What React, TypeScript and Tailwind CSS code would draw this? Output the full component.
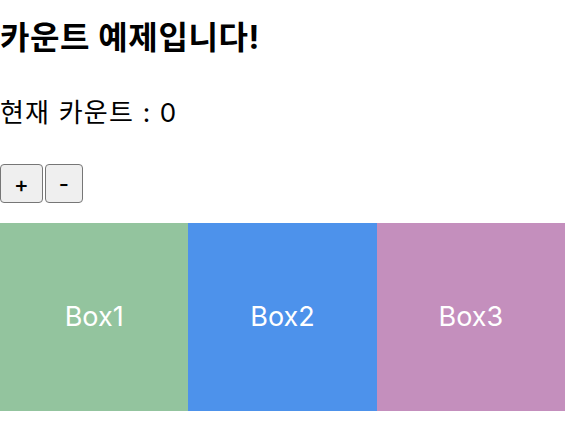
import { useState } from 'react';

const boxes = [
  { label: 'Box1', color: 'bg-[#93c49e]' },
  { label: 'Box2', color: 'bg-[#4d92eb]' },
  { label: 'Box3', color: 'bg-[#c48fbd]' },
];

const App = () => {
  const [count, setCount] = useState(0);

  return (
    <div className="min-h-screen bg-white text-black font-['Inter','Noto_Sans_CJK_KR',sans-serif]">
      {/* Title + counter */}
      <h1 className="pt-[20px] text-[32px] font-bold leading-[36px] tracking-[0.6px]">카운트 예제입니다!</h1>
      <p className="mt-[42px] text-[26px] leading-[30px] tracking-[1.2px]">현재 카운트 : {count}</p>

      <div className="mt-[36px] flex gap-[2px]">
        <button
          onClick={() => setCount(count + 1)}
          className="h-[39px] px-[13px] text-[22px] font-medium leading-none bg-[#efefef] border border-[#767676] rounded-[4px]"
        >
          +
        </button>
        <button
          onClick={() => setCount(count - 1)}
          className="h-[39px] px-[13px] text-[22px] font-medium leading-none bg-[#efefef] border border-[#767676] rounded-[4px]"
        >
          -
        </button>
      </div>

      {/* Boxes */}
      <div className="mt-[20px] flex w-[565px]">
        {boxes.map((box) => (
          <div
            key={box.label}
            className={`${box.color} flex-1 h-[188px] flex items-center justify-center text-white text-[27px]`}
          >
            {box.label}
          </div>
        ))}
      </div>
    </div>
  );
};

export default App;
